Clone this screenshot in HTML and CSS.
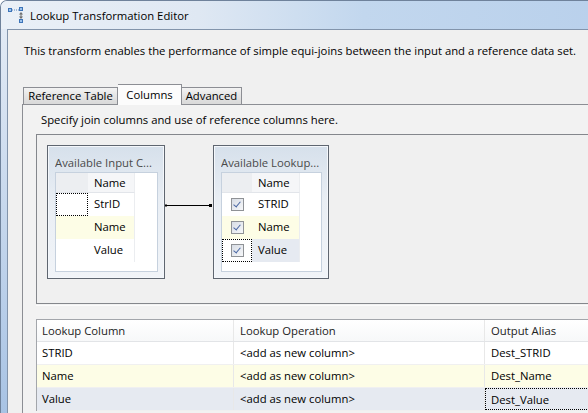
FILE: index.html
```html
<!DOCTYPE html>
<html>
<head>
    <title>Lookup Transformation Editor</title>
    <meta name="viewport" content="width=device-width, initial-scale=1">
    <link rel="stylesheet" href="styles.css">
</head>
<body>
    <div class="window">
        <div class="titlebar">
            <svg class="app_icon" width="16" height="16" viewBox="0 0 16 16">
                <rect x="1.5" y="1.5" width="3" height="3" fill="#9cc2ec" stroke="#3d74b8"/>
                <line x1="5" y1="3" x2="12" y2="3" stroke="#5b86bd" stroke-dasharray="1 1"/>
                <rect x="12.5" y="0.5" width="3" height="3" fill="#9cc2ec" stroke="#3d74b8"/>
                <path d="M14 5 L12 7.5 H16 Z" fill="#6d6d6d"/>
                <line x1="14" y1="7" x2="14" y2="10" stroke="#6d6d6d"/>
                <path d="M14 12 L12 9.5 H16 Z" fill="#6d6d6d"/>
                <rect x="12.5" y="12.5" width="3" height="3" fill="#9cc2ec" stroke="#3d74b8"/>
            </svg>
            <span>Lookup Transformation Editor</span>
        </div>
        <div class="client">
            <p class="desc">This transform enables the performance of simple equi-joins between the input and a reference data set.</p>
            <div class="tabs">
                <div class="tab tab_ref">Reference Table</div>
                <div class="tab tab_active">Columns</div>
                <div class="tab tab_adv">Advanced</div>
            </div>
            <div class="panel">
                <p class="hint">Specify join columns and use of reference columns here.</p>
                <div class="designer">
                    <div class="colbox">
                        <div class="colbox_title">Available Input C...</div>
                        <div class="mini_grid">
                            <div class="mini_row mini_head">
                                <div class="sel sel_in"></div>
                                <div class="nm nm_in">Name</div>
                            </div>
                            <div class="mini_row">
                                <div class="sel sel_in focus"></div>
                                <div class="nm nm_in">StrID</div>
                            </div>
                            <div class="mini_row row_yellow">
                                <div class="sel sel_in"></div>
                                <div class="nm nm_in">Name</div>
                            </div>
                            <div class="mini_row">
                                <div class="sel sel_in"></div>
                                <div class="nm nm_in">Value</div>
                            </div>
                        </div>
                    </div>
                    <svg class="link" width="48" height="5" viewBox="0 0 48 5">
                        <rect x="0" y="1.5" width="2" height="2" fill="#000"/>
                        <line x1="1" y1="2.5" x2="46" y2="2.5" stroke="#000"/>
                        <rect x="44" y="1" width="3" height="3" fill="#000"/>
                    </svg>
                    <div class="colbox colbox_lookup">
                        <div class="colbox_title">Available Lookup...</div>
                        <div class="mini_grid">
                            <div class="mini_row mini_head">
                                <div class="sel sel_lk"></div>
                                <div class="nm nm_lk">Name</div>
                            </div>
                            <div class="mini_row">
                                <div class="sel sel_lk"><span class="chk"></span></div>
                                <div class="nm nm_lk">STRID</div>
                            </div>
                            <div class="mini_row row_yellow">
                                <div class="sel sel_lk"><span class="chk"></span></div>
                                <div class="nm nm_lk">Name</div>
                            </div>
                            <div class="mini_row">
                                <div class="sel sel_lk focus"><span class="chk"></span></div>
                                <div class="nm nm_lk row_sel">Value</div>
                            </div>
                        </div>
                    </div>
                </div>
                <div class="splitter"></div>
                <div class="grid">
                    <div class="grid_row grid_head">
                        <div class="cell c1">Lookup Column</div>
                        <div class="cell c2">Lookup Operation</div>
                        <div class="cell c3">Output Alias</div>
                    </div>
                    <div class="grid_row">
                        <div class="cell c1">STRID</div>
                        <div class="cell c2">&lt;add as new column&gt;</div>
                        <div class="cell c3">Dest_STRID</div>
                    </div>
                    <div class="grid_row row_yellow">
                        <div class="cell c1">Name</div>
                        <div class="cell c2">&lt;add as new column&gt;</div>
                        <div class="cell c3">Dest_Name</div>
                    </div>
                    <div class="grid_row row_sel">
                        <div class="cell c1">Value</div>
                        <div class="cell c2">&lt;add as new column&gt;</div>
                        <div class="cell c3 focus">Dest_Value</div>
                    </div>
                </div>
            </div>
        </div>
    </div>
</body>
</html>
```

FILE: styles.css
```css
html, body {
	margin: 0;
}
body {
	width: 588px;
	height: 413px;
	overflow: hidden;
	background: #ffffff;
	font-family: "Open Sans", "Noto Sans", sans-serif;
	font-size: 11.3px;
	color: #1a1a1a;
}
.window {
	width: 660px;
	height: 413px;
	box-sizing: border-box;
	border-top: 1px solid #6f829b;
	border-left: 1px solid #6f829b;
	border-top-left-radius: 7px;
	background: linear-gradient(#e6edf6, #a8c3e4);
	overflow: hidden;
}
.titlebar {
	height: 28px;
	display: flex;
	align-items: center;
	gap: 7px;
	padding-left: 6px;
	background: linear-gradient(to right, #eaf0f7 0%, #dfe8f3 30%, #c2d7ee 55%, #b7cfeb 100%);
	color: #000;
}
.app_icon {
	display: block;
}
.client {
	margin-left: 6px;
	height: 390px;
	border-top: 1px solid #8294ab;
	border-left: 1px solid #8294ab;
	background: #f0f0f0;
	padding: 13px 0 0 14px;
	box-sizing: border-box;
	overflow: hidden;
}
.desc {
	margin: 0 0 0 2px;
	line-height: 15px;
	white-space: nowrap;
	color: #000;
}

/* tabs */
.tabs {
	display: flex;
	align-items: flex-end;
	margin-top: 27px;
	height: 20px;
	margin-bottom: -1px;
	padding-left: 1px;
}
.tab {
	height: 16px;
	line-height: 16px;
	border: 1px solid #8c8e94;
	border-bottom: none;
	background: linear-gradient(#f3f3f3, #e4e4e4 50%, #d9d9d9);
	text-align: center;
	color: #000;
	margin-bottom: 1px;
}
.tab_ref {
	width: 93px;
}
.tab_adv {
	width: 59px;
	border-left: none;
}
.tab_active {
	width: 63px;
	height: 20px;
	line-height: 19px;
	margin-bottom: 0;
	background: #fcfcfc;
	border-left: none;
	position: relative;
	z-index: 1;
}
.panel {
	border-top: 1px solid #8c8e94;
	border-left: 1px solid #8c8e94;
	background: #f2f2f2;
	height: 320px;
	padding-left: 13px;
}
.hint {
	margin: 0;
	padding: 7px 0 0 5px;
	line-height: 15px;
	color: #000;
}

/* designer surface */
.designer {
	margin-top: 7px;
	width: 600px;
	height: 158px;
	border: 1px solid #84878c;
	border-right: none;
	background: #f0f0f0;
	padding: 10px 0 0 10px;
	display: flex;
	align-items: flex-start;
}
.colbox {
	width: 118px;
	height: 134px;
	box-sizing: border-box;
	border: 1px solid #5f6670;
	background: linear-gradient(#d6e0eb, #e9eef4 40%, #f1f4f8);
	padding: 0 6px 6px 7px;
	box-shadow: inset 0 0 0 1px #f4f7fb;
}
.colbox_lookup {
	width: 116px;
}
.colbox_title {
	height: 26px;
	box-sizing: border-box;
	padding-top: 9px;
	line-height: 15px;
	white-space: nowrap;
	overflow: hidden;
	color: #4a4a4a;
}
.mini_grid {
	height: 100px;
	box-sizing: border-box;
	border: 1px solid #c6d1de;
	background: #ffffff;
}
.mini_row {
	display: flex;
	height: 23px;
	line-height: 22px;
}
.mini_head {
	height: 20px;
	line-height: 20px;
}
.mini_head .sel {
	background: #eceef1;
	border-bottom: 1px solid #e2e5ea;
}
.mini_head .nm {
	background: #f5f6f8;
	border-bottom: 1px solid #e2e5ea;
}
.sel {
	box-sizing: border-box;
	display: flex;
	align-items: center;
	justify-content: center;
}
.sel_in {
	width: 32px;
}
.sel_lk {
	width: 30px;
}
.nm {
	box-sizing: border-box;
	padding-left: 6px;
	border-right: 1px solid #ebedf0;
	color: #000;
}
.nm_in {
	width: 47px;
}
.nm_lk {
	width: 48px;
}
.mini_row.row_yellow .sel,
.mini_row.row_yellow .nm {
	background: #fdfde6;
}
.focus {
	border: 1px dotted #000;
}
.chk {
	display: block;
	width: 11px;
	height: 11px;
	border: 1px solid #8f9296;
	background: linear-gradient(135deg, #d8dde5, #f6f7f9);
	position: relative;
}
.chk::after {
	content: "";
	position: absolute;
	left: 3px;
	top: 1px;
	width: 3px;
	height: 6px;
	border: solid #4a67a3;
	border-width: 0 1.5px 1.5px 0;
	transform: rotate(40deg);
}
.link {
	display: block;
	margin-top: 58px;
}

.splitter {
	height: 13px;
	border-top: 1px solid #fbfbfb;
	margin-top: 1px;
}

/* lookup grid */
.grid {
	width: 600px;
	border-top: 1px solid #a3a6ab;
	border-left: 1px solid #a3a6ab;
	background: #ffffff;
}
.grid_row {
	display: flex;
	height: 23px;
	line-height: 22px;
	border-bottom: 1px solid #f0f0f0;
	box-sizing: border-box;
	color: #000;
}
.grid_head {
	height: 22px;
	line-height: 21px;
	background: linear-gradient(#ffffff, #f7f8f9);
	border-bottom: 1px solid #e2e4e7;
	color: #222;
}
.cell {
	box-sizing: border-box;
	padding-left: 5px;
	border-right: 1px solid #e8e8e8;
	white-space: nowrap;
}
.c1 {
	width: 197px;
}
.c2 {
	width: 251px;
	padding-left: 6px;
}
.c3 {
	width: 152px;
	padding-left: 6px;
}
.grid_row.row_yellow {
	background: #fdfde6;
}
.row_sel {
	background: #e6eaf1;
}
.cell.focus {
	padding-left: 5px;
}
```
